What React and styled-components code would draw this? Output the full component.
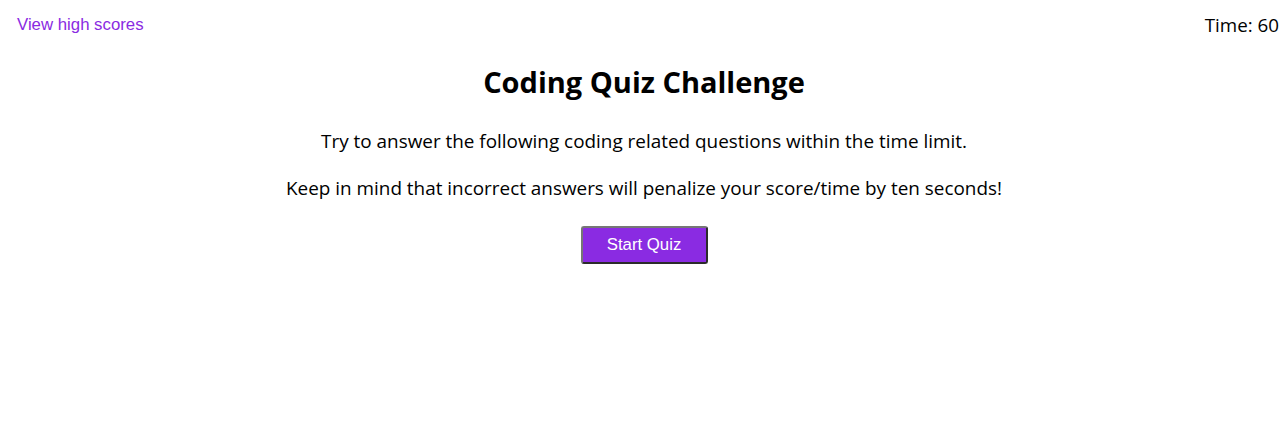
import React from 'react';
import styled, { createGlobalStyle } from 'styled-components';

const GlobalStyle = createGlobalStyle`
    html, body {
        margin: 0;
        padding: 0;
        background: #ffffff;
    }
    body {
        font-family: "Open Sans", "Noto Sans", sans-serif;
        color: #000000;
    }
`;

const Page = styled.div`
    width: 100%;
    min-height: 426px;
`;

const TopBar = styled.header`
    display: flex;
    justify-content: space-between;
    align-items: center;
    padding: 12px 9px 0 17px;
    height: 26px;
`;

const ScoresLink = styled.a`
    font-family: "Liberation Sans", Arial, sans-serif;
    font-size: 16.8px;
    color: #8a2be2;
    text-decoration: none;
    cursor: pointer;
`;

const Timer = styled.div`
    font-size: 18.8px;
`;

const Intro = styled.main`
    display: flex;
    flex-direction: column;
    align-items: center;
    text-align: center;
    padding-top: 23px;
`;

const Title = styled.h1`
    margin: 0 0 25px;
    font-size: 29px;
    font-weight: 700;
    line-height: 42px;
`;

const Text = styled.p`
    margin: 0 0 21px;
    font-size: 18.9px;
    line-height: 26px;
`;

const StartButton = styled.button`
    margin-top: 4px;
    width: 127px;
    height: 38px;
    background: #8a2be2;
    color: #ffffff;
    font-family: "Liberation Sans", Arial, sans-serif;
    font-size: 16.8px;
    border: 2px solid;
    border-color: #767676 #2b2b2b #2b2b2b #767676;
    border-radius: 3px;
    cursor: pointer;
`;

export default function App() {
    return (
        <Page>
            <GlobalStyle />
            <TopBar>
                <ScoresLink>View high scores</ScoresLink>
                <Timer>Time: 60</Timer>
            </TopBar>
            <Intro>
                <Title>Coding Quiz Challenge</Title>
                <Text>Try to answer the following coding related questions within the time limit.</Text>
                <Text>Keep in mind that incorrect answers will penalize your score/time by ten seconds!</Text>
                <StartButton>Start Quiz</StartButton>
            </Intro>
        </Page>
    );
}
